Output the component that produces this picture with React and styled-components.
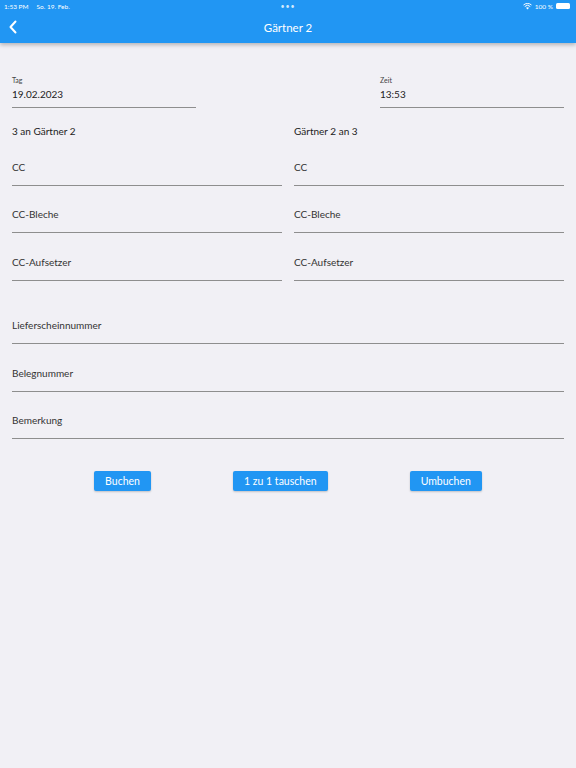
import styled, { createGlobalStyle } from "styled-components"

const GlobalStyle = createGlobalStyle`
    body {
        margin: 0;
        background: #f1f0f5;
        font-family: Lato, "Noto Sans", sans-serif;
    }
`
const Page = styled.div`
    width: 100%;
    min-height: 768px;
    background: #f1f0f5;
`
const AppBar = styled.div`
    background: #2196f3;
    color: #fff;
    box-shadow: 0 2px 4px rgba(0,0,0,0.25);
`
const StatusBar = styled.div`
    height: 12px;
    display: flex;
    align-items: center;
    justify-content: space-between;
    padding: 0 6px 0 4px;
    font-size: 6.5px;
    position: relative;
`
const StatusLeft = styled.div`
    display: flex;
    gap: 8px;
`
const Dots = styled.div`
    position: absolute;
    left: 50%;
    transform: translateX(-50%);
    font-size: 7px;
    letter-spacing: 1px;
    opacity: 0.8;
`
const StatusRight = styled.div`
    display: flex;
    align-items: center;
    gap: 3px;
`
const Battery = styled.div`
    width: 14px;
    height: 6px;
    border-radius: 1.5px;
    background: #fff;
`
const TitleRow = styled.div`
    height: 31px;
    display: flex;
    align-items: center;
    justify-content: center;
    position: relative;
    font-size: 11.5px;
`
const Back = styled.svg`
    position: absolute;
    left: 8px;
    top: 8px;
`
const Content = styled.div`
    padding: 33px 12px 0;
`
const TopRow = styled.div`
    display: flex;
    justify-content: space-between;
`
const DateField = styled.div`
    width: 184px;
    border-bottom: 1px solid #8e8e8e;
    padding-bottom: 6px;
`
const SmallLabel = styled.div`
    font-size: 7px;
    line-height: 9px;
    color: #444;
    margin-bottom: 2px;
`
const Value = styled.div`
    font-size: 10px;
    line-height: 14px;
    color: #222;
`
const Columns = styled.div`
    display: grid;
    grid-template-columns: 1fr 1fr;
    column-gap: 12px;
    margin-top: 16px;
`
const Heading = styled.div`
    font-size: 10px;
    line-height: 14px;
    color: #222;
`
const Field = styled.div`
    height: 47.5px;
    box-sizing: border-box;
    display: flex;
    align-items: flex-end;
    padding-bottom: 11px;
    border-bottom: 1px solid #8e8e8e;
    font-size: 10px;
    line-height: 14px;
    color: #333;
`
const FullFields = styled.div`
    margin-top: 16px;
`
const Buttons = styled.div`
    display: flex;
    justify-content: space-evenly;
    margin-top: 32px;
`
const Button = styled.button`
    background: #2196f3;
    color: #fff;
    border: none;
    border-radius: 2px;
    height: 20px;
    padding: 0 ${p => p.$pad}px;
    font-family: inherit;
    font-size: 10.5px;
    box-shadow: 0 1px 2px rgba(0,0,0,0.2);
`

const Column = ({ title }) => (
    <div>
        <Heading>{title}</Heading>
        <Field>CC</Field>
        <Field>CC-Bleche</Field>
        <Field>CC-Aufsetzer</Field>
    </div>
)

const App = () => {
    return (
        <Page>
            <GlobalStyle />
            <AppBar>
                <StatusBar>
                    <StatusLeft>
                        <span>1:53 PM</span>
                        <span>So. 19. Feb.</span>
                    </StatusLeft>
                    <Dots>•••</Dots>
                    <StatusRight>
                        <svg width="9" height="7" viewBox="0 0 18 14">
                            <path d="M9 13 L12 9.5 A5 5 0 0 0 6 9.5 Z" fill="#fff" />
                            <path d="M3.5 7 A8 8 0 0 1 14.5 7" stroke="#fff" strokeWidth="2" fill="none" />
                            <path d="M1 4 A12 12 0 0 1 17 4" stroke="#fff" strokeWidth="2" fill="none" />
                        </svg>
                        <span>100 %</span>
                        <Battery />
                    </StatusRight>
                </StatusBar>
                <TitleRow>
                    <Back width="10" height="14" viewBox="0 0 10 14">
                        <path d="M7.5 1.5 L2.5 7 L7.5 12.5" stroke="#fff" strokeWidth="2" fill="none" strokeLinecap="round" strokeLinejoin="round" />
                    </Back>
                    Gärtner 2
                </TitleRow>
            </AppBar>
            <Content>
                <TopRow>
                    <DateField>
                        <SmallLabel>Tag</SmallLabel>
                        <Value>19.02.2023</Value>
                    </DateField>
                    <DateField>
                        <SmallLabel>Zeit</SmallLabel>
                        <Value>13:53</Value>
                    </DateField>
                </TopRow>
                <Columns>
                    <Column title="3 an Gärtner 2" />
                    <Column title="Gärtner 2 an 3" />
                </Columns>
                <FullFields>
                    <Field>Lieferscheinnummer</Field>
                    <Field>Belegnummer</Field>
                    <Field>Bemerkung</Field>
                </FullFields>
                <Buttons>
                    <Button $pad={11}>Buchen</Button>
                    <Button $pad={11}>1 zu 1 tauschen</Button>
                    <Button $pad={11}>Umbuchen</Button>
                </Buttons>
            </Content>
        </Page>
    )
}

export default App
